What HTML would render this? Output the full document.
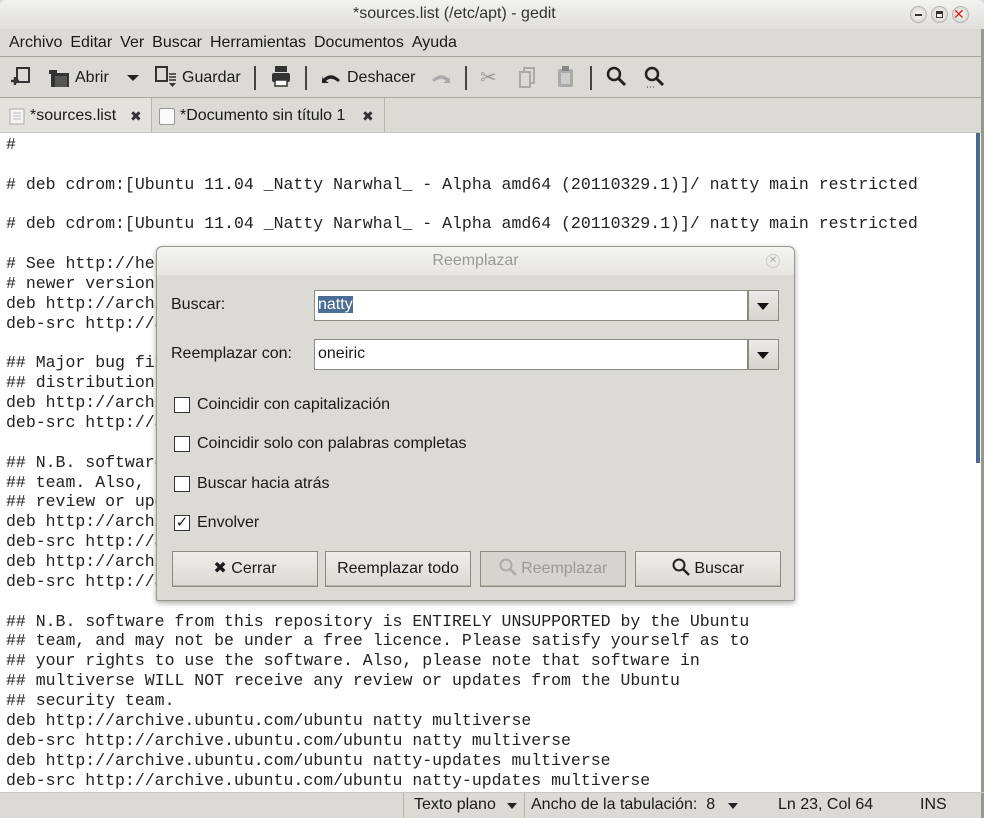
<!DOCTYPE html>
<html><head><meta charset="utf-8"><style>
*{box-sizing:border-box;margin:0;padding:0}
body{width:984px;height:818px;overflow:hidden;background:#dcdad5;font-family:"Liberation Sans","DejaVu Sans",sans-serif;font-size:15.5px;color:#1a1a1a;position:relative}
.abs{position:absolute}
#title{left:0;top:0;width:984px;height:29px;background:linear-gradient(#f2f2f0,#e0dfdb);border-radius:6px 6px 0 0;font-size:16px;color:#333}
#menu{top:29px;left:0;width:984px;height:28px;border-bottom:1px solid #a8a59c;padding-left:9px;line-height:28px;font-size:16px}
#menu span{margin-right:8px}
#tool{top:57px;left:0;width:984px;height:41px;border-bottom:1px solid #a8a59c;font-size:16px}
#tabs{top:98px;left:0;width:984px;height:35px;border-bottom:1px solid #c8c6c0}
#editor{top:133px;left:0;width:981px;height:659px;background:#fff;overflow:hidden}
pre{font-family:"Liberation Mono","DejaVu Sans Mono",monospace;font-size:16.53px;line-height:19.86px;color:#222;position:absolute;left:6px;top:2px}
#status{top:792px;left:0;width:984px;height:26px;border-top:1px solid #c8c6c0;font-size:16px;line-height:24px}
.sep{position:absolute;width:2px;height:24px;top:66px;background:#444}
#dlg{left:156px;top:246px;width:639px;height:355px;background:#dcdad5;border:1px solid #9a978f;border-radius:6px 6px 2px 2px;box-shadow:0 2px 6px rgba(0,0,0,.35)}
.inp{position:absolute;height:31px;background:#fff;border:1px solid #8c897f;font-size:16px;line-height:28px;padding-left:3px}
.dd{position:absolute;width:31px;height:31px;border:1px solid #8c897f;background:linear-gradient(#eceae6,#d6d4ce)}
.dd:after{content:"";position:absolute;left:8px;top:12px;border:6px solid transparent;border-top:7px solid #111;border-bottom:0}
.cb{position:absolute;left:17px;width:16px;height:16px;border:1px solid #333;background:#fff}
.lbl{position:absolute;left:40px;font-size:16px}
.btn{position:absolute;top:304px;height:36px;width:146px;border:1px solid #8c897f;background:linear-gradient(#eeede9,#dbd9d3);text-align:center;line-height:33px;font-size:16px;box-shadow:inset 0 -1px 0 #b8b5ad}
</style></head><body>
<div id="title" class="abs"><span class="abs" style="left:353px;top:5px">*sources.list (/etc/apt) - gedit</span>
<div class="abs" style="right:57px;top:6px;width:17px;height:17px;border-radius:50%;background:radial-gradient(#fafafa,#cfcdc8);border:1px solid #b8b6b0"><div class="abs" style="left:4px;top:7px;width:7px;height:2px;background:#333"></div></div>
<div class="abs" style="right:36px;top:6px;width:17px;height:17px;border-radius:50%;background:radial-gradient(#fafafa,#cfcdc8);border:1px solid #b8b6b0"><div class="abs" style="left:4px;top:4px;width:7px;height:7px;border:1.5px solid #333;border-top-width:3px"></div></div>
<div class="abs" style="right:15px;top:6px;width:17px;height:17px;border-radius:50%;background:radial-gradient(#fafafa,#cfcdc8);border:1px solid #b8b6b0;color:#d22;font-size:14px;line-height:14px;font-weight:bold">✕</div>
</div>
<div id="menu" class="abs"><span>Archivo</span><span>Editar</span><span>Ver</span><span>Buscar</span><span>Herramientas</span><span>Documentos</span><span>Ayuda</span></div>
<div id="tool" class="abs">
<svg class="abs" style="left:10px;top:9px" width="22" height="22"><rect x="7" y="2" width="12" height="14" fill="none" stroke="#333" stroke-width="2"/><path d="M1 15h8M5 11v8" stroke="#333" stroke-width="2.5"/></svg>
<svg class="abs" style="left:48px;top:9px" width="24" height="22"><rect x="1" y="4" width="8" height="4" fill="#333"/><rect x="3" y="7" width="18" height="14" fill="#333"/><rect x="7" y="10" width="12" height="11" fill="#555"/></svg>
<span class="abs" style="left:75px;top:12px">Abrir</span>
<div class="abs" style="left:127px;top:18px;border:6px solid transparent;border-top:6px solid #222;border-bottom:0"></div>
<svg class="abs" style="left:154px;top:8px" width="26" height="24"><rect x="2" y="2" width="11" height="14" fill="none" stroke="#333" stroke-width="2"/><path d="M15 9h7M15 12h7M15 15h7" stroke="#333" stroke-width="1.5"/><path d="M15 18h7l-3.5 4z" fill="#333"/></svg>
<span class="abs" style="left:182px;top:12px">Guardar</span>
<div class="sep" style="left:254px;top:9px"></div>
<svg class="abs" style="left:270px;top:8px" width="22" height="24"><rect x="5" y="1" width="12" height="6" fill="#333"/><rect x="2" y="8" width="18" height="9" rx="2" fill="#333"/><rect x="5" y="15" width="12" height="6" fill="#fff" stroke="#333" stroke-width="1.5"/></svg>
<div class="sep" style="left:305px;top:9px"></div>
<svg class="abs" style="left:321px;top:12px" width="22" height="16"><path d="M2 10 Q10 2 19 11 L17 13 Q10 7 5 12 L8 14 H1 V7z" fill="#222"/></svg>
<span class="abs" style="left:347px;top:12px">Deshacer</span>
<svg class="abs" style="left:429px;top:12px" width="22" height="16"><path d="M20 10 Q12 2 3 11 L5 13 Q12 7 17 12 L14 14 H21 V7z" fill="#aaa"/></svg>
<div class="sep" style="left:465px;top:9px"></div>
<span class="abs" style="left:480px;top:8px;color:#999;font-size:20px">✂</span>
<svg class="abs" style="left:518px;top:9px" width="20" height="22"><rect x="6" y="2" width="10" height="15" fill="none" stroke="#aaa" stroke-width="2"/><rect x="2" y="6" width="10" height="15" fill="#dcdad5" stroke="#aaa" stroke-width="2"/></svg>
<svg class="abs" style="left:556px;top:8px" width="20" height="24"><rect x="2" y="4" width="15" height="18" rx="2" fill="#aaa"/><rect x="6" y="1" width="7" height="5" fill="#888"/><rect x="5" y="8" width="9" height="11" fill="#ccc"/></svg>
<div class="sep" style="left:590px;top:9px"></div>
<svg class="abs" style="left:606px;top:9px" width="22" height="22"><circle cx="8" cy="8" r="6" fill="none" stroke="#222" stroke-width="2.5"/><path d="M12 12l7 7" stroke="#222" stroke-width="3"/></svg>
<svg class="abs" style="left:644px;top:9px" width="22" height="24"><circle cx="8" cy="8" r="6" fill="none" stroke="#222" stroke-width="2.5"/><path d="M12 12l7 7" stroke="#222" stroke-width="3"/><path d="M3 21h1M6 21h1M9 21h1" stroke="#222"/></svg>
</div>
<div id="tabs" class="abs">
<div class="abs" style="left:0;top:0;width:152px;height:34px;background:#e4e2dd;border-right:1px solid #b8b5ad"></div>
<svg class="abs" style="left:9px;top:10px" width="16" height="17"><rect x="1" y="1" width="14" height="15" fill="#f4f4f2" stroke="#aaa"/><path d="M4 5h8M4 8h8M4 11h8" stroke="#bbb"/></svg>
<span class="abs" style="left:30px;top:9px;font-size:16px">*sources.list</span>
<span class="abs" style="left:130px;top:10px;font-size:14px;color:#333">✖</span>
<div class="abs" style="left:159px;top:10px;width:16px;height:17px;border:1px solid #999;background:#fafafa;border-radius:2px"></div>
<span class="abs" style="left:180px;top:9px;font-size:16px">*Documento sin título 1</span>
<span class="abs" style="left:362px;top:10px;font-size:14px;color:#333">✖</span>
<div class="abs" style="left:384px;top:0;width:1px;height:34px;background:#b8b5ad"></div>
</div>
<div id="editor" class="abs"><pre>#

# deb cdrom:[Ubuntu 11.04 _Natty Narwhal_ - Alpha amd64 (20110329.1)]/ natty main restricted

# deb cdrom:[Ubuntu 11.04 _Natty Narwhal_ - Alpha amd64 (20110329.1)]/ natty main restricted

# See http://help.ubuntu.com/community/UpgradeNotes for how to upgrade to
# newer versions of the distribution.
deb http://archive.ubuntu.com/ubuntu natty main restricted
deb-src http://archive.ubuntu.com/ubuntu natty main restricted

## Major bug fix updates produced after the final release of the
## distribution.
deb http://archive.ubuntu.com/ubuntu natty-updates main restricted
deb-src http://archive.ubuntu.com/ubuntu natty-updates main restricted

## N.B. software from this repository is ENTIRELY UNSUPPORTED by the Ubuntu
## team. Also, please note that software in universe WILL NOT receive any
## review or updates from the Ubuntu security team.
deb http://archive.ubuntu.com/ubuntu natty universe
deb-src http://archive.ubuntu.com/ubuntu natty universe
deb http://archive.ubuntu.com/ubuntu natty-updates universe
deb-src http://archive.ubuntu.com/ubuntu natty-updates universe

## N.B. software from this repository is ENTIRELY UNSUPPORTED by the Ubuntu
## team, and may not be under a free licence. Please satisfy yourself as to
## your rights to use the software. Also, please note that software in
## multiverse WILL NOT receive any review or updates from the Ubuntu
## security team.
deb http://archive.ubuntu.com/ubuntu natty multiverse
deb-src http://archive.ubuntu.com/ubuntu natty multiverse
deb http://archive.ubuntu.com/ubuntu natty-updates multiverse
deb-src http://archive.ubuntu.com/ubuntu natty-updates multiverse</pre></div>
<div class="abs" style="left:976px;top:133px;width:4px;height:330px;background:#4a6a90"></div>
<div class="abs" style="left:981px;top:29px;width:3px;height:789px;background:#9a978f"></div>
<div id="status" class="abs">
<div class="abs" style="left:403px;top:0;width:1px;height:25px;background:#b8b5ad"></div>
<span class="abs" style="left:414px">Texto plano</span>
<div class="abs" style="left:507px;top:10px;border:5px solid transparent;border-top:6px solid #222;border-bottom:0"></div>
<div class="abs" style="left:524px;top:0;width:1px;height:25px;background:#b8b5ad"></div>
<span class="abs" style="left:531px">Ancho de la tabulación:&nbsp; 8</span>
<div class="abs" style="left:728px;top:10px;border:5px solid transparent;border-top:6px solid #222;border-bottom:0"></div>
<span class="abs" style="left:778px">Ln 23, Col 64</span>
<span class="abs" style="left:920px">INS</span>
</div>
<div id="dlg" class="abs">
<div class="abs" style="left:0;top:0;width:637px;height:28px;background:linear-gradient(#f4f4f2,#e6e5e1);border-radius:6px 6px 0 0;text-align:center;line-height:27px;color:#999;font-size:16px">Reemplazar</div>
<div class="abs" style="left:609px;top:7px;width:14px;height:14px;border-radius:50%;border:1px solid #ccc;color:#aaa;font-size:10px;line-height:12px;text-align:center">✕</div>
<span class="abs" style="left:14px;top:49px;font-size:16px">Buscar:</span>
<div class="inp" style="left:157px;top:43px;width:434px"><span style="background:#4b6e96;color:#fff">natty</span></div>
<div class="dd" style="left:591px;top:43px"></div>
<span class="abs" style="left:14px;top:98px;font-size:16px">Reemplazar con:</span>
<div class="inp" style="left:157px;top:92px;width:434px">oneiric</div>
<div class="dd" style="left:591px;top:92px"></div>
<div class="cb" style="top:150px"></div><span class="lbl" style="top:149px">Coincidir con capitalización</span>
<div class="cb" style="top:189px"></div><span class="lbl" style="top:188px">Coincidir solo con palabras completas</span>
<div class="cb" style="top:229px"></div><span class="lbl" style="top:228px">Buscar hacia atrás</span>
<div class="cb" style="top:268px;font-size:15px;line-height:13px;text-align:center">✓</div><span class="lbl" style="top:267px">Envolver</span>
<div class="btn" style="left:15px">✖ Cerrar</div>
<div class="btn" style="left:168px">Reemplazar todo</div>
<div class="btn" style="left:323px;color:#999;background:#d6d4ce"><svg width="18" height="18" style="vertical-align:-3px"><circle cx="7" cy="7" r="5.5" fill="none" stroke="#aaa" stroke-width="2"/><path d="M11 11l6 6" stroke="#aaa" stroke-width="2.5"/></svg> Reemplazar</div>
<div class="btn" style="left:478px"><svg width="18" height="18" style="vertical-align:-3px"><circle cx="7" cy="7" r="5.5" fill="none" stroke="#222" stroke-width="2"/><path d="M11 11l6 6" stroke="#222" stroke-width="2.5"/></svg> Buscar</div>
</div>
</body></html>
